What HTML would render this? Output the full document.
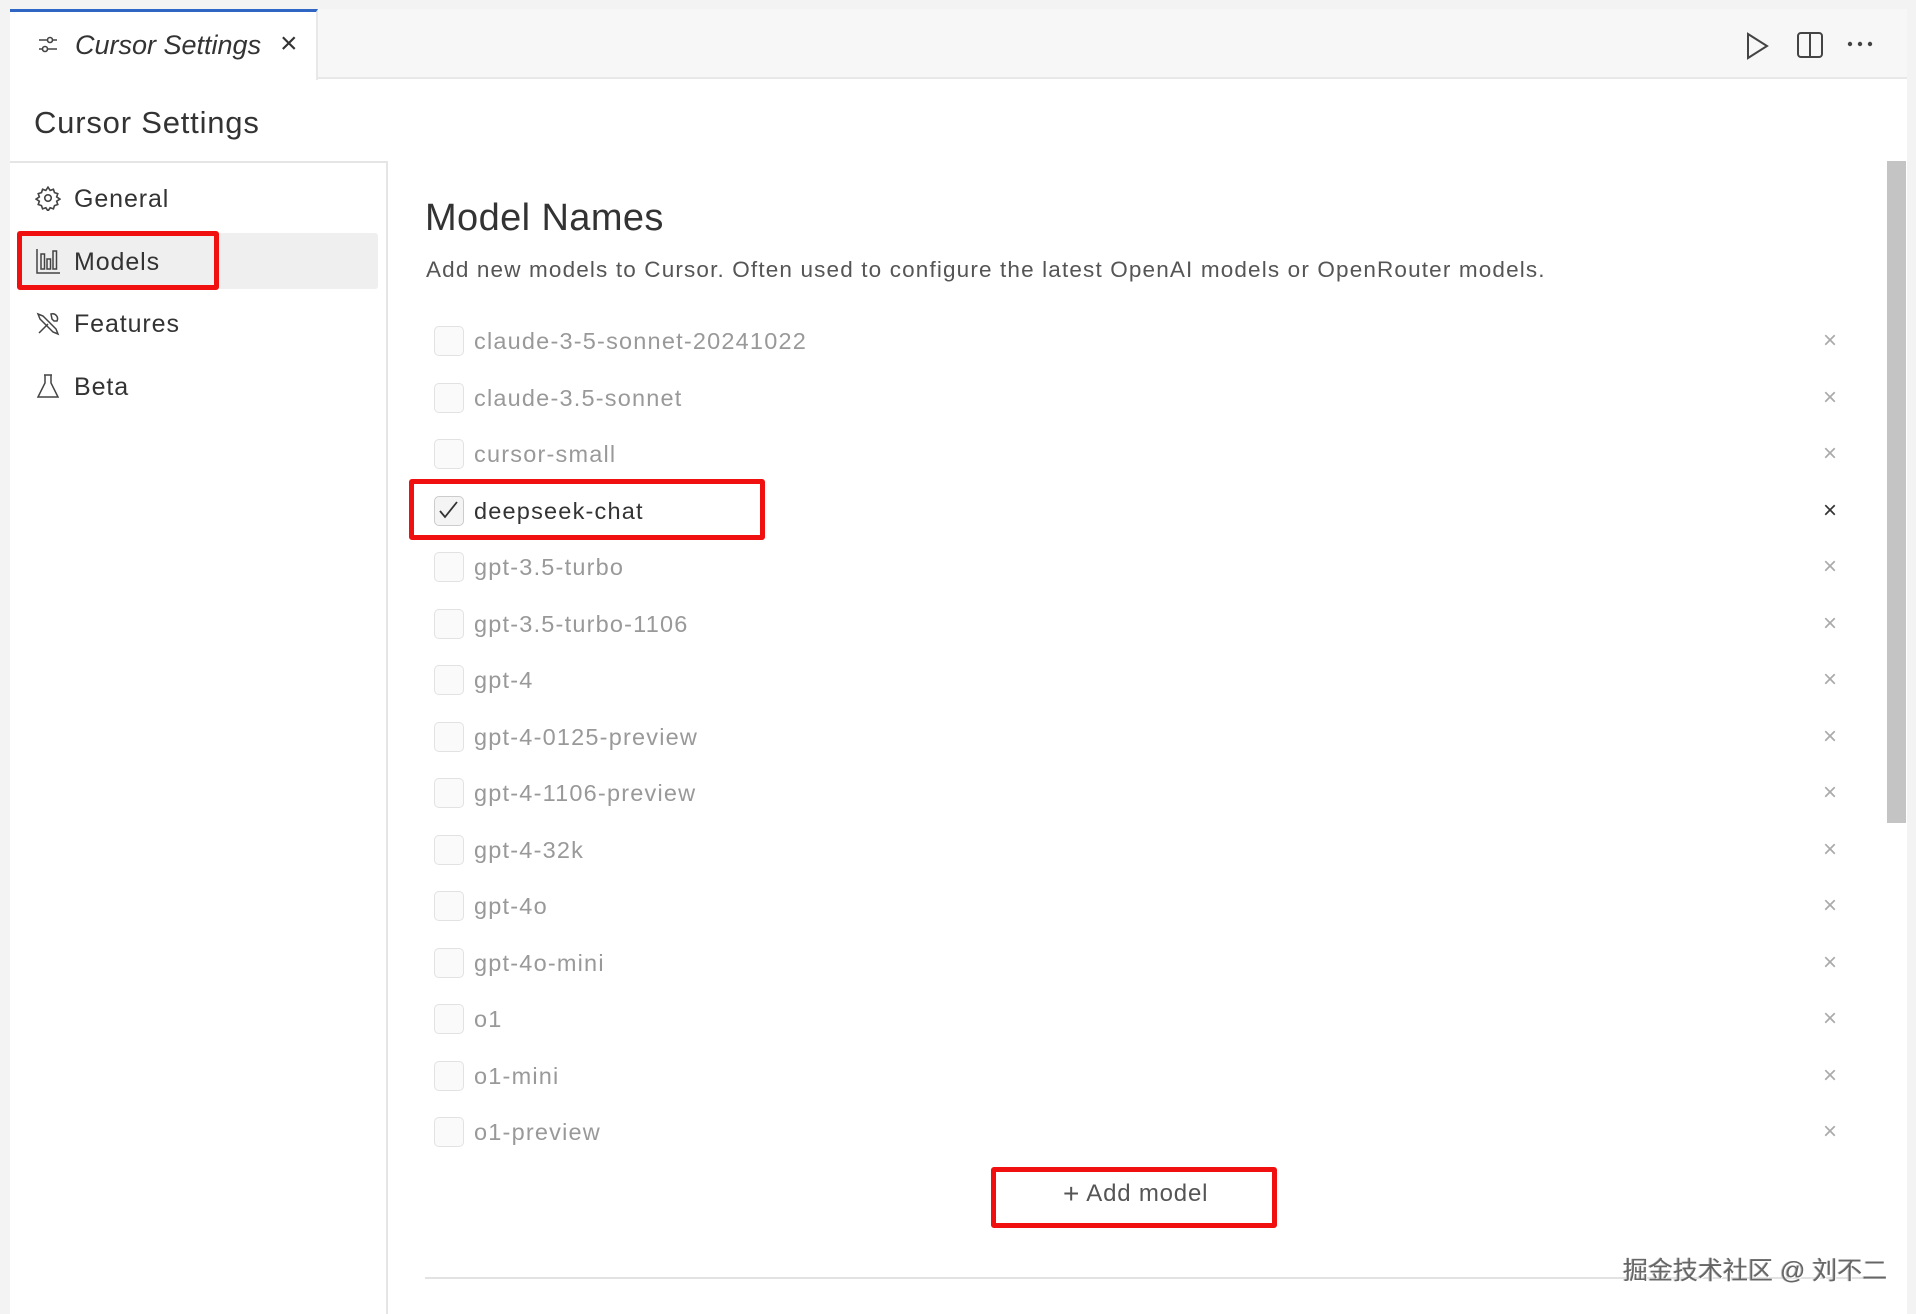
<!DOCTYPE html>
<html><head><meta charset="utf-8"><style>
*{margin:0;padding:0;box-sizing:border-box}
body{width:1916px;height:1314px;background:#f3f3f3;font-family:"Liberation Sans","Noto Sans CJK SC",sans-serif;position:relative;overflow:hidden;color:#333}
.abs{position:absolute}
.panel{left:10px;top:9px;width:1897px;height:1305px;background:#fff}
.tabbar{left:10px;top:9px;width:1897px;height:70px;background:#f7f7f7;border-bottom:2px solid #e8e8e8}
.tab{left:10px;top:9px;width:308px;height:71px;background:#fff;border-top:3px solid #2f66c4;border-right:2px solid #e8e8e8}
.nav{left:10px;top:161px;width:378px;height:1153px;border-right:2px solid #e5e5e5;border-top:2px solid #e5e5e5}
.navitem{position:absolute;left:74px;font-size:25px;color:#333;letter-spacing:.9px}
.row{position:absolute;left:425px;width:1420px;height:40px}
.cb{position:absolute;left:9px;top:5px;width:30px;height:30px;border:1.5px solid #e2e2e2;border-radius:5px;background:#fafafa}
.lbl{position:absolute;left:49px;top:7px;font-size:23.5px;color:#999;letter-spacing:1.2px}
.x{position:absolute;left:1398px;top:6px;font-size:24px;color:#aaa}
.red{position:absolute;border:5px solid #f01010;border-radius:3px}
</style></head><body>
<div class="abs panel"></div>
<div class="abs tabbar"></div>
<div class="abs tab"></div>
<svg class="abs" style="left:37px;top:34px" width="24" height="22" viewBox="0 0 24 22" fill="none" stroke="#444" stroke-width="1.6"><path d="M2 6h18M2 15h18"/><circle cx="13" cy="6" r="2.5" fill="#fff"/><circle cx="8" cy="15" r="2.5" fill="#fff"/></svg>
<div class="abs" style="left:75px;top:30px;font-size:27px;font-style:italic;color:#333">Cursor Settings</div>
<div class="abs" style="left:280px;top:27px;font-size:30px;color:#333">×</div>
<svg class="abs" style="left:1744px;top:32px" width="26" height="28" viewBox="0 0 26 28" fill="none" stroke="#444" stroke-width="2"><path d="M4 2v24l19-12z"/></svg>
<svg class="abs" style="left:1796px;top:31px" width="28" height="28" viewBox="0 0 28 28" fill="none" stroke="#444" stroke-width="2"><rect x="2" y="2" width="24" height="24" rx="3"/><path d="M14 2v24"/></svg>
<svg class="abs" style="left:1846px;top:40px" width="30" height="8"><circle cx="4" cy="4" r="2.2" fill="#444"/><circle cx="14" cy="4" r="2.2" fill="#444"/><circle cx="24" cy="4" r="2.2" fill="#444"/></svg>
<div class="abs" style="left:34px;top:105px;font-size:31px;color:#333;letter-spacing:.8px">Cursor Settings</div>
<div class="abs nav"></div>
<div class="abs" style="left:18px;top:233px;width:360px;height:56px;background:#efefef;border-radius:3px"></div>
<svg class="abs" style="left:35px;top:185px" width="26" height="26" viewBox="0 0 24 24" fill="none" stroke="#444" stroke-width="1.5"><path d="M12 2l2 3 3-1 1 3 3 1-1 3 3 2-3 2 1 3-3 1-1 3-3-1-2 3-2-3-3 1-1-3-3-1 1-3-3-2 3-2-1-3 3-1 1-3 3 1z"/><circle cx="12" cy="12" r="3"/></svg>
<div class="navitem" style="top:185px">General</div>
<svg class="abs" style="left:35px;top:248px" width="26" height="26" viewBox="0 0 26 26" fill="none" stroke="#444" stroke-width="1.5"><path d="M2 1v24h23"/><rect x="6" y="6" width="3.5" height="15"/><rect x="12" y="11" width="3.5" height="10"/><rect x="18" y="3" width="3.5" height="18"/></svg>
<div class="navitem" style="top:248px">Models</div>
<svg class="abs" style="left:35px;top:311px" width="26" height="26" viewBox="0 0 26 26" fill="none" stroke="#444" stroke-width="1.5"><path d="M3 3l5 2 13 13 2 5-5-2L5 8z"/><path d="M4 22l9-9M16 3a5 5 0 0 1 6 7l-3 0-2-2z"/></svg>
<div class="navitem" style="top:310px">Features</div>
<svg class="abs" style="left:35px;top:373px" width="26" height="26" viewBox="0 0 26 26" fill="none" stroke="#444" stroke-width="1.5"><path d="M9 2h8M10 2v8L3 24h20L16 10V2"/></svg>
<div class="navitem" style="top:373px">Beta</div>
<div class="red" style="left:17px;top:231px;width:202px;height:59px"></div>

<div class="abs" style="left:425px;top:197px;font-size:38px;color:#333;letter-spacing:.4px">Model Names</div>
<div class="abs" style="left:426px;top:257px;font-size:22.5px;color:#555;letter-spacing:1.15px">Add new models to Cursor. Often used to configure the latest OpenAI models or OpenRouter models.</div>

<div class="row" style="top:321px"><div class="cb"></div><div class="lbl">claude-3-5-sonnet-20241022</div><div class="x">×</div></div>
<div class="row" style="top:378px"><div class="cb"></div><div class="lbl">claude-3.5-sonnet</div><div class="x">×</div></div>
<div class="row" style="top:434px"><div class="cb"></div><div class="lbl">cursor-small</div><div class="x">×</div></div>
<div class="row" style="top:491px"><div class="cb" style="border-color:#ccc;background:#f4f4f4"><svg width="27" height="27" viewBox="0 0 27 27" fill="none" stroke="#333" stroke-width="1.8"><path d="M5 14l5 6L22 5"/></svg></div><div class="lbl" style="color:#333">deepseek-chat</div><div class="x" style="color:#333">×</div></div>
<div class="row" style="top:547px"><div class="cb"></div><div class="lbl">gpt-3.5-turbo</div><div class="x">×</div></div>
<div class="row" style="top:604px"><div class="cb"></div><div class="lbl">gpt-3.5-turbo-1106</div><div class="x">×</div></div>
<div class="row" style="top:660px"><div class="cb"></div><div class="lbl">gpt-4</div><div class="x">×</div></div>
<div class="row" style="top:717px"><div class="cb"></div><div class="lbl">gpt-4-0125-preview</div><div class="x">×</div></div>
<div class="row" style="top:773px"><div class="cb"></div><div class="lbl">gpt-4-1106-preview</div><div class="x">×</div></div>
<div class="row" style="top:830px"><div class="cb"></div><div class="lbl">gpt-4-32k</div><div class="x">×</div></div>
<div class="row" style="top:886px"><div class="cb"></div><div class="lbl">gpt-4o</div><div class="x">×</div></div>
<div class="row" style="top:943px"><div class="cb"></div><div class="lbl">gpt-4o-mini</div><div class="x">×</div></div>
<div class="row" style="top:999px"><div class="cb"></div><div class="lbl">o1</div><div class="x">×</div></div>
<div class="row" style="top:1056px"><div class="cb"></div><div class="lbl">o1-mini</div><div class="x">×</div></div>
<div class="row" style="top:1112px"><div class="cb"></div><div class="lbl">o1-preview</div><div class="x">×</div></div>
<div class="red" style="left:409px;top:479px;width:356px;height:61px"></div>

<div class="abs" style="left:1063px;top:1178px;font-size:24px;color:#555;letter-spacing:.8px"><span style="font-size:28px;vertical-align:-2px">+</span> Add model</div>
<div class="red" style="left:991px;top:1167px;width:286px;height:61px"></div>
<div class="abs" style="left:425px;top:1277px;width:1445px;height:2px;background:#e2e2e2"></div>
<div class="abs" style="left:1887px;top:161px;width:19px;height:662px;background:#c4c4c4"></div>
<div class="abs" style="left:1623px;top:1251px;font-size:25px;color:#666;text-shadow:1px 1px 0 #fff,-1px 0 0 #bbb">掘金技术社区 @ 刘不二</div>
</body></html>
